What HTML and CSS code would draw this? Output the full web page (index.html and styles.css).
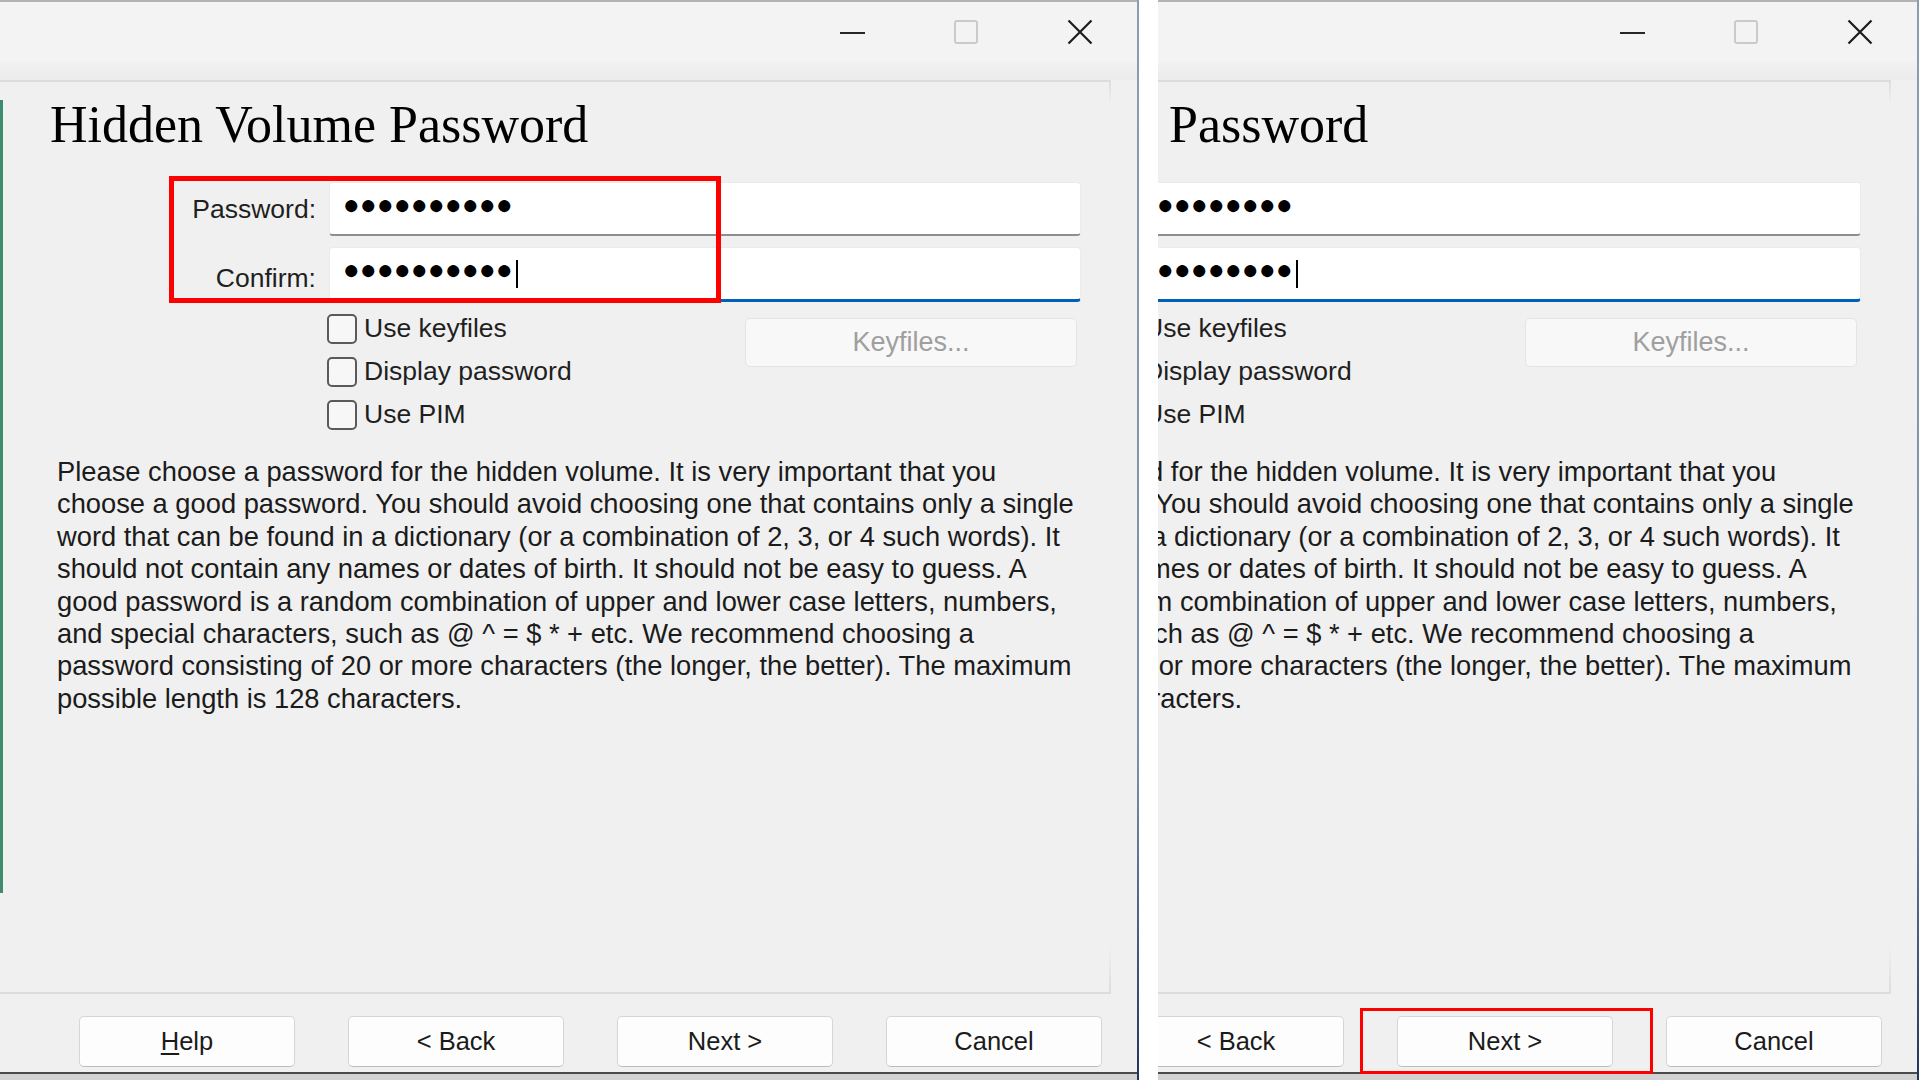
FILE: index.html
```html
<!DOCTYPE html>
<html lang="en">
<head>
<meta charset="utf-8">
<title>Hidden Volume Password</title>
<link rel="stylesheet" href="styles.css">
</head>
<body>
<div class="screen">
  <div class="panel panel-left">
    <div class="dialog">
      <div class="titlebar">
        <div class="ctl"><span class="ico-min"></span></div>
        <div class="ctl"><span class="ico-max"></span></div>
        <div class="ctl"><svg class="ico-close" width="26" height="26" viewBox="0 0 26 26"><path d="M1.5 1.5L24.5 24.5M24.5 1.5L1.5 24.5" stroke="#1b1b1b" stroke-width="2.2" fill="none"/></svg></div>
      </div>
      <div class="band"></div>
      <div class="frame">
        <h1 class="heading">Hidden Volume Password</h1>
        <div class="form">
          <label class="lbl">Password:</label>
          <div class="field"><span class="dots">●●●●●●●●●●</span></div>
          <label class="lbl lbl-confirm">Confirm:</label>
          <div class="field field-focus"><span class="dots">●●●●●●●●●●</span><span class="caret"></span></div>
        </div>
        <div class="options">
          <div class="checks">
            <div class="check"><span class="box"></span><span>Use keyfiles</span></div>
            <div class="check"><span class="box"></span><span>Display password</span></div>
            <div class="check"><span class="box"></span><span>Use PIM</span></div>
          </div>
          <div class="btn-keyfiles">Keyfiles...</div>
        </div>
        <p class="info">Please choose a password for the hidden volume. It is very important that you<br>choose a good password. You should avoid choosing one that contains only a single<br>word that can be found in a dictionary (or a combination of 2, 3, or 4 such words). It<br>should not contain any names or dates of birth. It should not be easy to guess. A<br>good password is a random combination of upper and lower case letters, numbers,<br>and special characters, such as @ ^ = $ * + etc. We recommend choosing a<br>password consisting of 20 or more characters (the longer, the better). The maximum<br>possible length is 128 characters.</p>
      </div>
      <div class="buttons">
        <div class="btn"><u>H</u>elp</div>
        <div class="btn">&lt; Back</div>
        <div class="btn">Next &gt;</div>
        <div class="btn">Cancel</div>
      </div>
      <div class="bottom-strip"></div>
      <div class="highlight hl-fields"></div>
    </div>
    <div class="backwin-edge"></div>
  </div>
  <div class="gap"></div>
  <div class="panel panel-right">
    <div class="dialog dialog-shifted">
      <div class="titlebar">
        <div class="ctl"><span class="ico-min"></span></div>
        <div class="ctl"><span class="ico-max"></span></div>
        <div class="ctl"><svg class="ico-close" width="26" height="26" viewBox="0 0 26 26"><path d="M1.5 1.5L24.5 24.5M24.5 1.5L1.5 24.5" stroke="#1b1b1b" stroke-width="2.2" fill="none"/></svg></div>
      </div>
      <div class="band"></div>
      <div class="frame">
        <h1 class="heading">Hidden Volume Password</h1>
        <div class="form">
          <label class="lbl">Password:</label>
          <div class="field"><span class="dots">●●●●●●●●●●</span></div>
          <label class="lbl lbl-confirm">Confirm:</label>
          <div class="field field-focus"><span class="dots">●●●●●●●●●●</span><span class="caret"></span></div>
        </div>
        <div class="options">
          <div class="checks">
            <div class="check"><span class="box"></span><span>Use keyfiles</span></div>
            <div class="check"><span class="box"></span><span>Display password</span></div>
            <div class="check"><span class="box"></span><span>Use PIM</span></div>
          </div>
          <div class="btn-keyfiles">Keyfiles...</div>
        </div>
        <p class="info">Please choose a password for the hidden volume. It is very important that you<br>choose a good password. You should avoid choosing one that contains only a single<br>word that can be found in a dictionary (or a combination of 2, 3, or 4 such words). It<br>should not contain any names or dates of birth. It should not be easy to guess. A<br>good password is a random combination of upper and lower case letters, numbers,<br>and special characters, such as @ ^ = $ * + etc. We recommend choosing a<br>password consisting of 20 or more characters (the longer, the better). The maximum<br>possible length is 128 characters.</p>
      </div>
      <div class="buttons">
        <div class="btn"><u>H</u>elp</div>
        <div class="btn">&lt; Back</div>
        <div class="btn">Next &gt;</div>
        <div class="btn">Cancel</div>
      </div>
      <div class="bottom-strip"></div>
      <div class="highlight hl-next"></div>
    </div>
  </div>
</div>
</body>
</html>
```
FILE: styles.css
```css
* { box-sizing: border-box; }
html, body { margin: 0; padding: 0; }
body {
  width: 1920px;
  height: 1080px;
  overflow: hidden;
  background: #ffffff;
  font-family: "Liberation Sans", Arial, sans-serif;
  color: #1b1b1b;
}
.screen { display: flex; width: 1920px; height: 1080px; }
.panel { height: 1080px; overflow: hidden; position: relative; flex: none; }
.panel-left { width: 1139px; }
.gap { width: 19px; flex: none; background: #ffffff; }
.panel-right { width: 762px; }

.dialog {
  width: 1139px;
  height: 1080px;
  display: flex;
  flex-direction: column;
  background: #f0f0f0;
  position: relative;
}
.dialog::after {
  content: "";
  position: absolute;
  top: 0; bottom: 0; right: 0;
  width: 2px;
  background: linear-gradient(#8c9cb3, #7e8fa9 70%, #22345a);
}
.dialog-shifted { margin-left: -378px; }

.titlebar {
  height: 62px;
  flex: none;
  display: flex;
  justify-content: flex-end;
  background: #f3f3f3;
  border-top: 2px solid #b3b3b3;
  padding-right: 2px;
}
.ctl { width: 114px; height: 60px; display: flex; align-items: center; justify-content: center; }
.ico-min { width: 25px; height: 2px; background: #262626; margin-top: 2px; }
.ico-max { width: 24px; height: 24px; border: 2px solid #cacaca; border-radius: 3px; }
.ico-close { display: block; }

.band { height: 18px; flex: none; background: linear-gradient(#f1f1f1, #ebebeb); }

.frame {
  flex: none;
  width: 1111px;
  height: 914px;
  border-top: 2px solid #dcdcdc;
  border-bottom: 2px solid #dcdcdc;
  padding-top: 17px;
  position: relative;
}
.frame::after {
  content: "";
  position: absolute;
  top: -2px; bottom: -2px; right: 0;
  width: 2px;
  background: linear-gradient(#dcdcdc, rgba(220,220,220,0) 24px, rgba(220,220,220,0) calc(100% - 50px), #dcdcdc);
}

.heading {
  margin: 0 0 0 50px;
  font-family: "Liberation Serif", "Times New Roman", serif;
  font-weight: normal;
  font-size: 52px;
  line-height: 51px;
  color: #000;
}

.form {
  display: grid;
  grid-template-columns: 316px 752px;
  column-gap: 13px;
  row-gap: 11px;
  margin-top: 32px;
}
.lbl { text-align: right; align-self: center; font-size: 26.5px; color: #1f1f1f; }
.lbl-confirm { padding-top: 7px; }
.field {
  height: 54px;
  background: #ffffff;
  border: 1px solid #ebebeb;
  border-bottom: 2px solid #8e8e8e;
  border-radius: 4px;
  display: flex;
  align-items: center;
  padding-left: 13px;
}
.field-focus { height: 55px; border-bottom: 3px solid #005fb8; }
.dots {
  font-family: "Liberation Mono", monospace;
  font-size: 28px;
  line-height: 30px;
  letter-spacing: 0.2px;
  color: #000;
  margin-top: -3px;
}
.caret { width: 2px; height: 28px; background: #000; margin-left: 3px; }

.options { display: flex; margin: 5px 0 0 327px; width: 750px; }
.checks { display: flex; flex-direction: column; }
.check { height: 43px; display: flex; align-items: center; gap: 7px; font-size: 26.5px; color: #1f1f1f; }
.box { width: 30px; height: 30px; border: 2px solid #5a5a5a; border-radius: 5px; background: #f7f7f7; flex: none; }
.btn-keyfiles {
  margin-left: auto;
  margin-top: 11px;
  width: 332px;
  height: 49px;
  border: 1px solid #e4e4e4;
  border-radius: 5px;
  background: #f8f8f8;
  color: #9f9f9f;
  display: flex;
  align-items: center;
  justify-content: center;
  font-size: 27px;
}

.info {
  margin: 20px 0 0 57px;
  font-size: 27.3px;
  line-height: 32.4px;
  white-space: nowrap;
  color: #1b1b1b;
}

.buttons { display: flex; gap: 53px; padding: 22px 0 0 79px; flex: none; }
.btn {
  width: 216px;
  height: 51px;
  border: 1px solid #d6d6d6;
  border-bottom-color: #bcbcbc;
  border-radius: 5px;
  background: #fdfdfd;
  display: flex;
  align-items: center;
  justify-content: center;
  font-size: 25.5px;
  color: #1b1b1b;
}
.btn u { text-underline-offset: 3px; }

.bottom-strip { margin-top: auto; height: 8px; flex: none; background: #d2d2d2; border-top: 2px solid #4a4a4a; }

.highlight { position: absolute; border-style: solid; border-color: #ff0000; }
.hl-fields { left: 169px; top: 176px; width: 552px; height: 127px; border-width: 5px; }
.hl-next { left: 580px; top: 1008px; width: 293px; height: 66px; border-width: 3px; }

.backwin-edge { position: absolute; left: 0; top: 100px; width: 3px; height: 793px; background: #3e8c6c; }
```
